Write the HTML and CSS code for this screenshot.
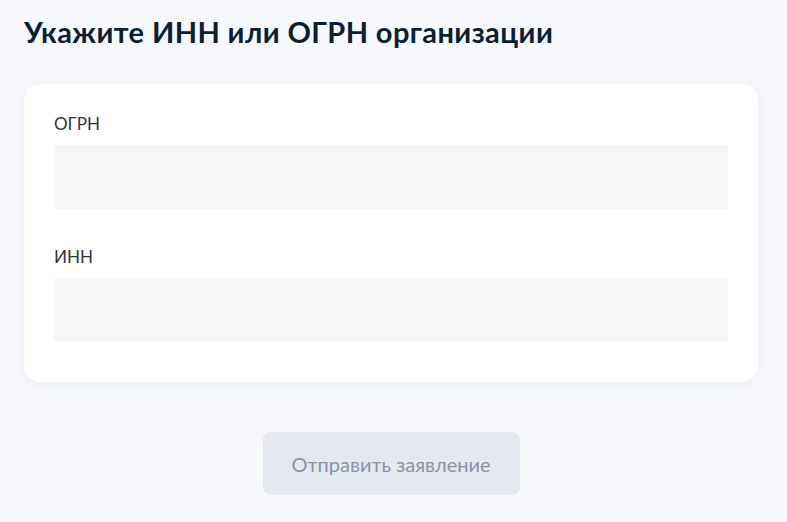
FILE: index.html
```html
<!DOCTYPE html>
<html lang="ru">
<head>
<meta charset="utf-8">
<link rel="stylesheet" href="styles.css">
</head>
<body>
<main class="page">
  <h1 class="title">Укажите ИНН или ОГРН организации</h1>
  <section class="card">
    <div class="field">
      <label class="label">ОГРН</label>
      <div class="input"></div>
    </div>
    <div class="field">
      <label class="label">ИНН</label>
      <div class="input"></div>
    </div>
  </section>
  <div class="actions">
    <button class="submit" type="button">Отправить заявление</button>
  </div>
</main>
</body>
</html>
```
FILE: styles.css
```css
html, body {
  margin: 0;
  padding: 0;
  background: #f6f8fc;
}
body {
  font-family: Lato, "Noto Sans", sans-serif;
  color: #0b1f33;
}
.page {
  width: 734px;
  padding: 0 0 0 24px;
}
.title {
  margin: 0;
  padding-top: 16px;
  font-size: 29px;
  line-height: 32px;
  letter-spacing: 0.4px;
  font-weight: 700;
  color: #0b1f33;
}
.card {
  margin-top: 36px;
  background: #ffffff;
  border-radius: 16px;
  box-shadow: 0 2px 10px rgba(160, 175, 200, 0.14);
  padding: 30px 30px 40px;
  display: flex;
  flex-direction: column;
  gap: 38px;
}
.field {
  display: flex;
  flex-direction: column;
  gap: 11px;
}
.label {
  font-size: 17px;
  line-height: 20px;
  color: #2a3444;
}
.input {
  height: 64px;
  background: #f5f6f8;
  border-radius: 3px;
}
.actions {
  display: flex;
  justify-content: center;
  margin-top: 50px;
}
.submit {
  width: 257px;
  height: 63px;
  border: none;
  border-radius: 8px;
  background: #e4e8f1;
  color: #8a93a3;
  font-family: Lato, "Noto Sans", sans-serif;
  font-size: 20px;
}
```
